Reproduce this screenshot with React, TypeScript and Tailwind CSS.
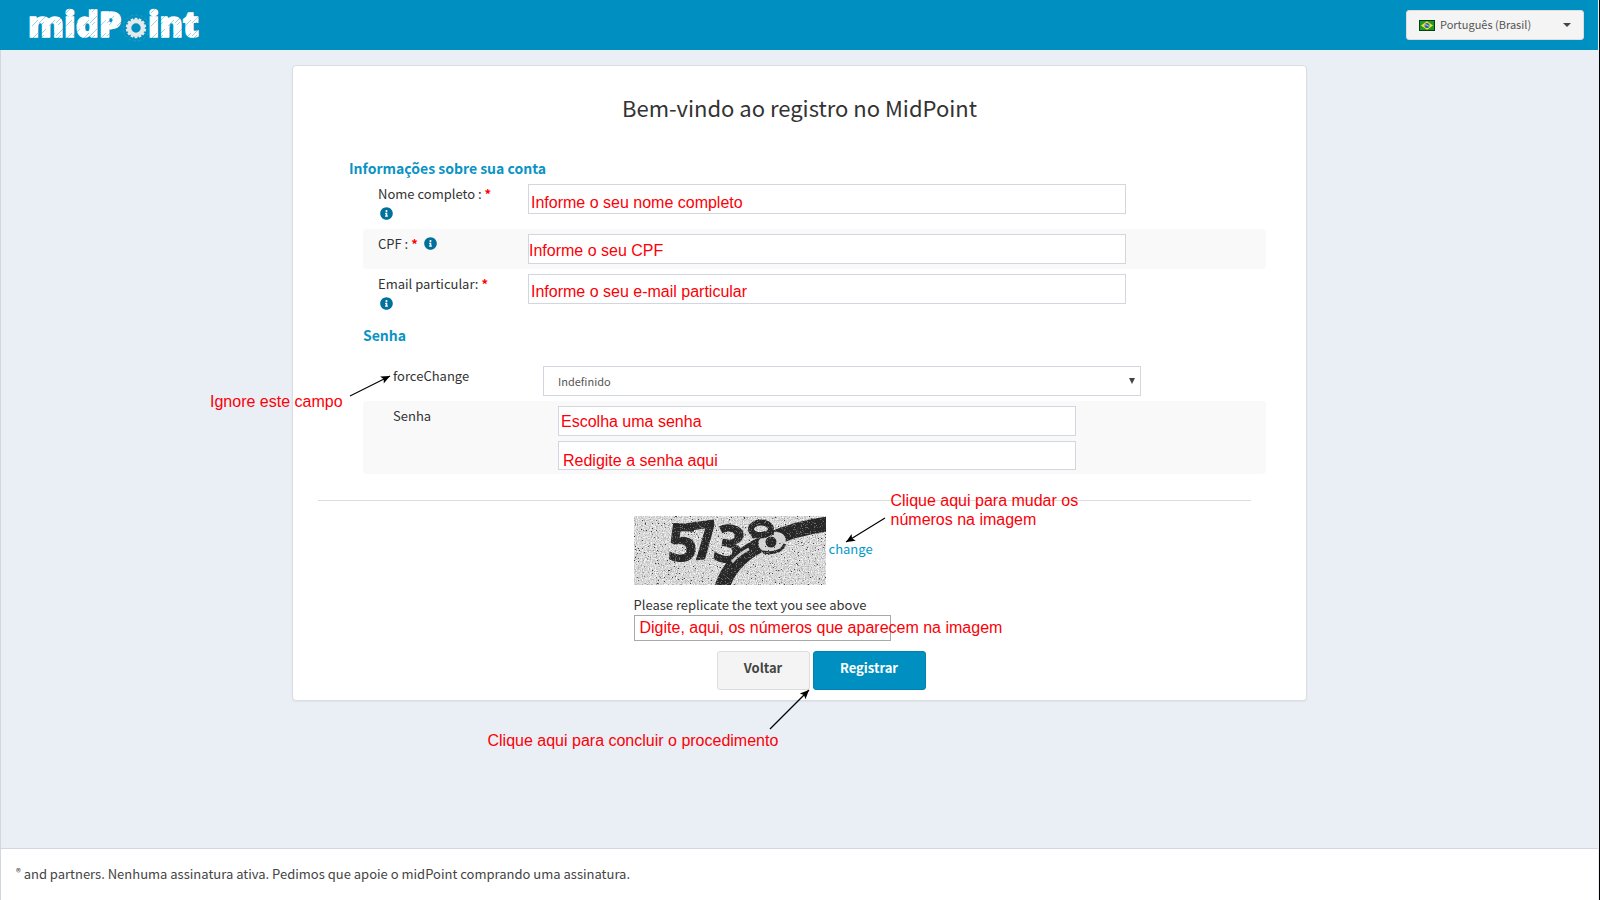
import type { ReactNode } from "react";
import { FaInfoCircle } from "react-icons/fa";

const inputClass =
  "block w-full border border-[#d2d6de] bg-white px-3 text-xs text-[#555] outline-none";
const noteClass =
  "pointer-events-none absolute z-10 whitespace-nowrap font-['Liberation_Sans',Arial,sans-serif] text-base leading-[19px] text-[#fb0007]";
const headingClass = "text-[14px] leading-[18px] font-bold text-[#0a93c4]";

function Note({ className, children }: { className: string; children: ReactNode }) {
  return <span className={`${noteClass} ${className}`}>{children}</span>;
}

function Gear() {
  const teeth = Array.from({ length: 14 }, (_, i) => (i * 360) / 14);
  return (
    <g transform="translate(115 28)">
      <circle r="13" fill="none" stroke="#8fa5ae" strokeWidth="0.6" strokeDasharray="3 2" opacity="0.6" />
      <circle r="6.8" fill="none" stroke="#e6e9eb" strokeWidth="4.2" />
      {teeth.map((a) => (
        <rect key={a} x="-1.4" y="-10.2" width="2.8" height="3" fill="#e6e9eb" transform={`rotate(${a})`} />
      ))}
    </g>
  );
}

function Logo() {
  return (
    <svg width="190" height="50" viewBox="0 0 190 50" role="img" aria-label="midPoint">
      <defs>
        <pattern id="streaks" width="17" height="13" patternUnits="userSpaceOnUse">
          <rect width="17" height="13" fill="#fff" />
          <path d="M1 10L8 3M11 13L17 7M3 12L6 9" stroke="#5db4d4" strokeWidth="0.6" />
        </pattern>
      </defs>
      <g fill="url(#streaks)" stroke="url(#streaks)" strokeWidth="1.6" className="font-['Open_Sans',sans-serif] font-extrabold">
        <text x="7" y="37" className="text-[36px]">midP</text>
        <text x="127" y="37" className="text-[35px]">int</text>
      </g>
      <Gear />
    </svg>
  );
}

function Flag() {
  return (
    <svg width="16" height="11" viewBox="0 0 16 11" className="pointer-events-none absolute left-[13px] top-[10px]" aria-hidden="true">
      <rect width="16" height="11" fill="#0b3d12" />
      <rect x="1" y="1" width="14" height="9" fill="#1d9c2c" />
      <path d="M8 1.3L14 5.5L8 9.7L2 5.5Z" fill="#f5e02c" />
      <circle cx="8" cy="5.5" r="2.5" fill="#2a5fb8" />
      <path d="M5.7 4.8Q8 4.4 10.2 6.4" stroke="#dfe9f5" strokeWidth="0.8" fill="none" />
    </svg>
  );
}

function Captcha() {
  return (
    <svg width="192" height="69" viewBox="0 0 192 69" role="img" aria-label="captcha" className="shrink-0 overflow-visible">
      <defs>
        <clipPath id="frame">
          <rect width="192" height="69" />
        </clipPath>
        <filter id="grain" x="0" y="0" width="100%" height="100%">
          <feTurbulence type="fractalNoise" baseFrequency="0.85" numOctaves="2" seed="4" />
          <feColorMatrix values="1.1 0 0 0 0.12  1.1 0 0 0 0.12  1.1 0 0 0 0.12  0 0 0 0 1" />
        </filter>
        <filter id="specks" x="0" y="0" width="100%" height="100%">
          <feTurbulence type="fractalNoise" baseFrequency="0.7" numOctaves="2" seed="11" />
          <feColorMatrix values="0 0 0 0 0.05  0 0 0 0 0.05  0 0 0 0 0.05  0 18 0 0 -12.7" />
        </filter>
        <filter id="lights" x="0" y="0" width="100%" height="100%">
          <feTurbulence type="fractalNoise" baseFrequency="0.8" numOctaves="2" seed="23" />
          <feColorMatrix values="0 0 0 0 0.9  0 0 0 0 0.9  0 0 0 0 0.9  0 0 9 0 -5.2" />
        </filter>
      </defs>
      <g clipPath="url(#frame)">
        <rect width="192" height="69" filter="url(#grain)" />
        <path d="M88 71Q98 42 128 28Q158 12 194 8" fill="none" stroke="#262626" strokeWidth="15" />
        <ellipse cx="138" cy="26" rx="14" ry="10" fill="#d2d2d2" transform="rotate(-15 138 26)" />
        <path d="M129 36Q146 39 151 28" fill="none" stroke="#262626" strokeWidth="3" />
        <circle cx="137" cy="26" r="5.5" fill="#262626" />
      </g>
      <g fill="#262626" stroke="#262626" strokeWidth="1" className="font-['Open_Sans',sans-serif] text-[52px] font-bold">
        <text x="34" y="45" transform="rotate(3 47 27)">5</text>
        <text x="54" y="43" transform="rotate(-8 68 25)">7</text>
        <text x="81" y="46" transform="rotate(10 92 27)">3</text>
      </g>
      <g fill="none" stroke="#262626">
        <ellipse cx="127" cy="13" rx="10" ry="6.5" strokeWidth="6" />
        <path d="M118 21Q128 16 140 17" strokeWidth="4" />
      </g>
      <path d="M98 46Q106 37 115 33" fill="none" stroke="#c8c8c8" strokeWidth="3" />
      <rect width="192" height="69" filter="url(#lights)" opacity="0.35" />
      <rect width="192" height="69" filter="url(#specks)" />
    </svg>
  );
}

function Arrow({ className, width, height, from, to }: {
  className: string;
  width: number;
  height: number;
  from: [number, number];
  to: [number, number];
}) {
  const angle = (Math.atan2(to[1] - from[1], to[0] - from[0]) * 180) / Math.PI;
  return (
    <svg width={width} height={height} className={`pointer-events-none absolute z-10 overflow-visible ${className}`} aria-hidden="true">
      <line x1={from[0]} y1={from[1]} x2={to[0]} y2={to[1]} stroke="#000" strokeWidth="1.2" />
      <path d="M0 0L-9 -4L-7 0L-9 4Z" transform={`translate(${to[0]} ${to[1]}) rotate(${angle})`} />
    </svg>
  );
}

function Field({ id, label, note, noteClassName, striped }: {
  id: string;
  label: string;
  note: string;
  noteClassName: string;
  striped?: boolean;
}) {
  return (
    <div className={`flex items-start rounded-sm py-[5px] ${striped ? "bg-[#f9f9f9]" : ""}`}>
      <div className="flex w-[165px] shrink-0 flex-wrap items-center gap-x-1 pl-[15px] pr-[35px]">
        <label htmlFor={id} className="whitespace-nowrap">
          {label} <span className="font-bold text-[#f00]">*</span>
        </label>
        <span className="flex h-5 items-center pb-px pl-[2px]">
          <FaInfoCircle className="size-[13px] text-[#00719a]" />
        </span>
      </div>
      <div className="relative mr-[140px] flex-1">
        <input id={id} type="text" className={`${inputClass} h-[30px]`} />
        <Note className={noteClassName}>{note}</Note>
      </div>
    </div>
  );
}

export default function App() {
  return (
    <div className="flex min-h-screen flex-col border-r border-black bg-[#eaeff6] font-['Noto_Sans_CJK_SC',sans-serif] text-[13px] leading-5 text-[#333]">
      <header className="mr-px flex h-[50px] items-center justify-between bg-[#008fc1] pl-[21px] pr-[14px]">
        <a href="#" className="block">
          <Logo />
        </a>
        <div className="relative">
          <Flag />
          <select
            aria-label="Idioma"
            className="h-[30px] w-[178px] appearance-none rounded-[3px] border border-[#ddd] bg-[#f4f4f4] pb-[2px] pl-[33px] text-[11px] text-[#555] outline-none"
          >
            <option>Português (Brasil)</option>
          </select>
          <svg width="8" height="4" viewBox="0 0 8 4" className="pointer-events-none absolute right-[13px] top-[13px]" aria-hidden="true">
            <path d="M0 0H8L4 4Z" fill="#444" />
          </svg>
        </div>
      </header>

      <main className="mr-px flex-1 border-l border-[#d2d6de] px-4 pt-[15px]">
        <form
          className="relative mx-auto w-full max-w-[1015px] rounded border border-[#d9dde3] bg-white pb-[10px] pt-[28px] shadow-xs"
          onSubmit={(e) => e.preventDefault()}
        >
          <h1 className="mb-[39px] text-center text-[22px] leading-[26px]">Bem-vindo ao registro no MidPoint</h1>

          <div className="pl-[56px] pr-[40px]">
            <h2 className={`${headingClass} mb-[2px]`}>Informações sobre sua conta</h2>
            <div className="ml-[14px]">
              <Field id="nome" label="Nome completo :" note="Informe o seu nome completo" noteClassName="left-[3px] top-[9px]" />
              <Field id="cpf" label="CPF :" note="Informe o seu CPF" noteClassName="left-px top-[7px]" striped />
              <Field id="email" label="Email particular:" note="Informe o seu e-mail particular" noteClassName="left-[3px] top-[8px]" />

              <h2 className={`${headingClass} mb-[17px] mt-[7px]`}>Senha</h2>

              <div className="relative flex items-start py-[5px]">
                <label htmlFor="force" className="w-[180px] shrink-0 pl-[30px]">
                  forceChange
                </label>
                <div className="relative mr-[125px] flex-1">
                  <select id="force" className="block h-[30px] w-full appearance-none border border-[#d2d6de] bg-white px-[14px] text-[11px] text-[#555] outline-none">
                    <option>Indefinido</option>
                  </select>
                  <svg width="6" height="6" viewBox="0 0 6 6" className="pointer-events-none absolute right-[6px] top-[12px]" aria-hidden="true">
                    <path d="M0 0H6L3 6Z" fill="#444" />
                  </svg>
                </div>
                <Note className="-left-[153px] top-[31px]">Ignore este campo</Note>
                <Arrow className="-left-[13px] top-[15px]" width={40} height={22} from={[0, 20]} to={[40, 0]} />
              </div>

              <div className="flex items-start rounded-sm bg-[#f9f9f9] pb-1 pt-[5px]">
                <label htmlFor="senha" className="w-[195px] shrink-0 pl-[30px]">
                  Senha
                </label>
                <div className="mr-[190px] flex flex-1 flex-col gap-[5px]">
                  <div className="relative">
                    <input id="senha" type="password" className={`${inputClass} h-[30px]`} />
                    <Note className="left-[3px] top-[6px]">Escolha uma senha</Note>
                  </div>
                  <div className="relative">
                    <input type="password" aria-label="Repetir senha" className={`${inputClass} h-[29px]`} />
                    <Note className="left-[5px] top-[10px]">Redigite a senha aqui</Note>
                  </div>
                </div>
              </div>
            </div>
          </div>

          <hr className="ml-[25px] mr-[55px] mt-[26px] border-[#ddd]" />

          <div className="mx-auto mt-[15px] w-[332px]">
            <div className="relative flex items-center gap-[3px]">
              <Captcha />
              <a href="#" className="pb-1 text-[#0099cc]">change</a>
              <Arrow className="left-[212px] top-[2px]" width={40} height={25} from={[39, 0]} to={[0, 24]} />
              <Note className="left-[257px] -top-[25px]">
                Clique aqui para mudar os
                <br />
                números na imagem
              </Note>
            </div>
            <label htmlFor="captcha" className="mt-[10px] block">
              Please replicate the text you see above
            </label>
            <div className="relative">
              <input id="captcha" type="text" className="block h-[26px] w-[257px] border border-[#a9a9a9] bg-white px-1 outline-none" />
              <Note className="left-[6px] top-[3px]">Digite, aqui, os números que aparecem na imagem</Note>
            </div>
            <div className="relative mt-[10px] flex gap-[3px] pl-[83px]">
              <button type="button" className="h-[39px] w-[93px] rounded-[3px] border border-[#ddd] bg-[#f4f4f4] pb-[5px] font-bold text-[#444]">
                Voltar
              </button>
              <button type="submit" className="h-[39px] w-[113px] rounded-[3px] border border-[#0083b0] bg-[#008fc1] pb-[5px] font-bold text-white">
                Registrar
              </button>
              <Arrow className="left-[136px] top-[39px]" width={40} height={40} from={[0, 39]} to={[39, 0]} />
              <Note className="-left-[146px] top-[80px]">Clique aqui para concluir o procedimento</Note>
            </div>
          </div>
        </form>
      </main>

      <footer className="mr-px h-[52px] border-l border-t border-[#d2d6de] bg-white px-[15px] pt-[15px] text-[#444]">
        <span className="align-[3px] text-[10px] leading-none">®</span> and partners. Nenhuma assinatura ativa. Pedimos que apoie o midPoint comprando uma assinatura.
      </footer>
    </div>
  );
}
